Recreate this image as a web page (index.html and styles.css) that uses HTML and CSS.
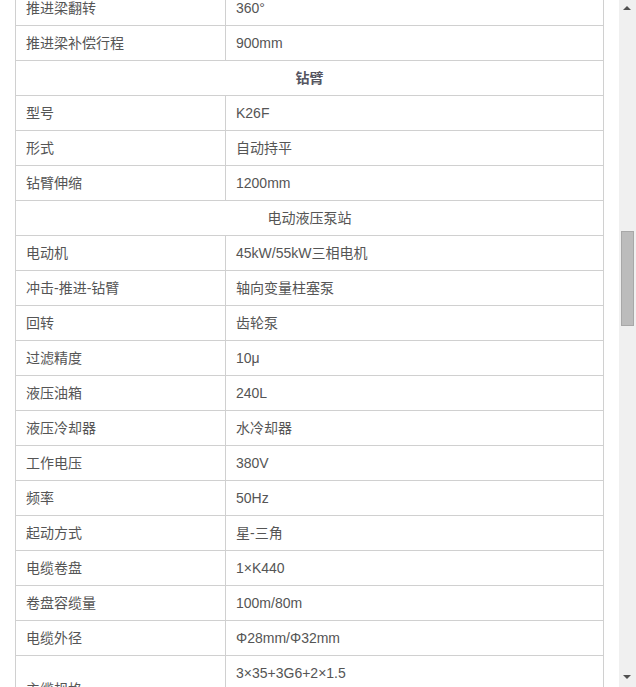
FILE: index.html
```html
<!DOCTYPE html>
<html lang="zh">
<head>
<meta charset="utf-8">
<link rel="stylesheet" href="styles.css">
</head>
<body>
<div class="page">
  <table class="spec">
    <colgroup><col class="c1"><col class="c2"></colgroup>
    <tbody>
      <tr><td>推进梁翻转</td><td>360°</td></tr>
      <tr><td>推进梁补偿行程</td><td>900mm</td></tr>
      <tr><td colspan="2" class="head bold">钻臂</td></tr>
      <tr><td>型号</td><td>K26F</td></tr>
      <tr><td>形式</td><td>自动持平</td></tr>
      <tr><td>钻臂伸缩</td><td>1200mm</td></tr>
      <tr><td colspan="2" class="head">电动液压泵站</td></tr>
      <tr><td>电动机</td><td>45kW/55kW三相电机</td></tr>
      <tr><td>冲击-推进-钻臂</td><td>轴向变量柱塞泵</td></tr>
      <tr><td>回转</td><td>齿轮泵</td></tr>
      <tr><td>过滤精度</td><td>10μ</td></tr>
      <tr><td>液压油箱</td><td>240L</td></tr>
      <tr><td>液压冷却器</td><td>水冷却器</td></tr>
      <tr><td>工作电压</td><td>380V</td></tr>
      <tr><td>频率</td><td>50Hz</td></tr>
      <tr><td>起动方式</td><td>星-三角</td></tr>
      <tr><td>电缆卷盘</td><td>1×K440</td></tr>
      <tr><td>卷盘容缆量</td><td>100m/80m</td></tr>
      <tr><td>电缆外径</td><td>Φ28mm/Φ32mm</td></tr>
      <tr><td>主缆规格</td><td class="multi">3×35+3G6+2×1.5<br>3×50+3G10+2×1.5</td></tr>
    </tbody>
  </table>
</div>
<div class="scrollbar">
  <div class="arrow up"></div>
  <div class="thumb"></div>
  <div class="arrow down"></div>
</div>
</body>
</html>
```
FILE: styles.css
```css
html, body {
  margin: 0;
  padding: 0;
  background: #fff;
  overflow: hidden;
  height: 687px;
}
.page {
  width: 619px;
  padding-left: 15px;
  margin-top: -10px;
  box-sizing: border-box;
}
.spec {
  border-collapse: collapse;
  table-layout: fixed;
  width: 589px;
  font-family: "Liberation Sans", "Noto Sans CJK SC", sans-serif;
  font-size: 14px;
  color: #555;
}
.c1 { width: 210px; }
.spec td {
  border: 1px solid #d0d0d0;
  padding: 6px 10px;
  line-height: 22px;
  height: 22px;
  vertical-align: middle;
}
.spec td.head {
  text-align: center;
}
.spec td.bold {
  font-weight: bold;
  color: #555560;
}
.spec td.multi {
  vertical-align: top;
  padding-bottom: 16px;
}
.scrollbar {
  position: absolute;
  top: 0;
  right: 0;
  width: 17px;
  height: 687px;
  background: #f0f0f0;
}
.thumb {
  position: absolute;
  left: 2px;
  top: 231px;
  width: 11px;
  height: 93px;
  background: #bcbcbc;
  border: 1px solid #a8a8a8;
}
.arrow {
  position: absolute;
  left: 4px;
  width: 0;
  height: 0;
  border-left: 4px solid transparent;
  border-right: 4px solid transparent;
}
.arrow.up {
  top: 6px;
  border-bottom: 4px solid #505050;
}
.arrow.down {
  top: 675px;
  border-top: 4px solid #505050;
}
```
